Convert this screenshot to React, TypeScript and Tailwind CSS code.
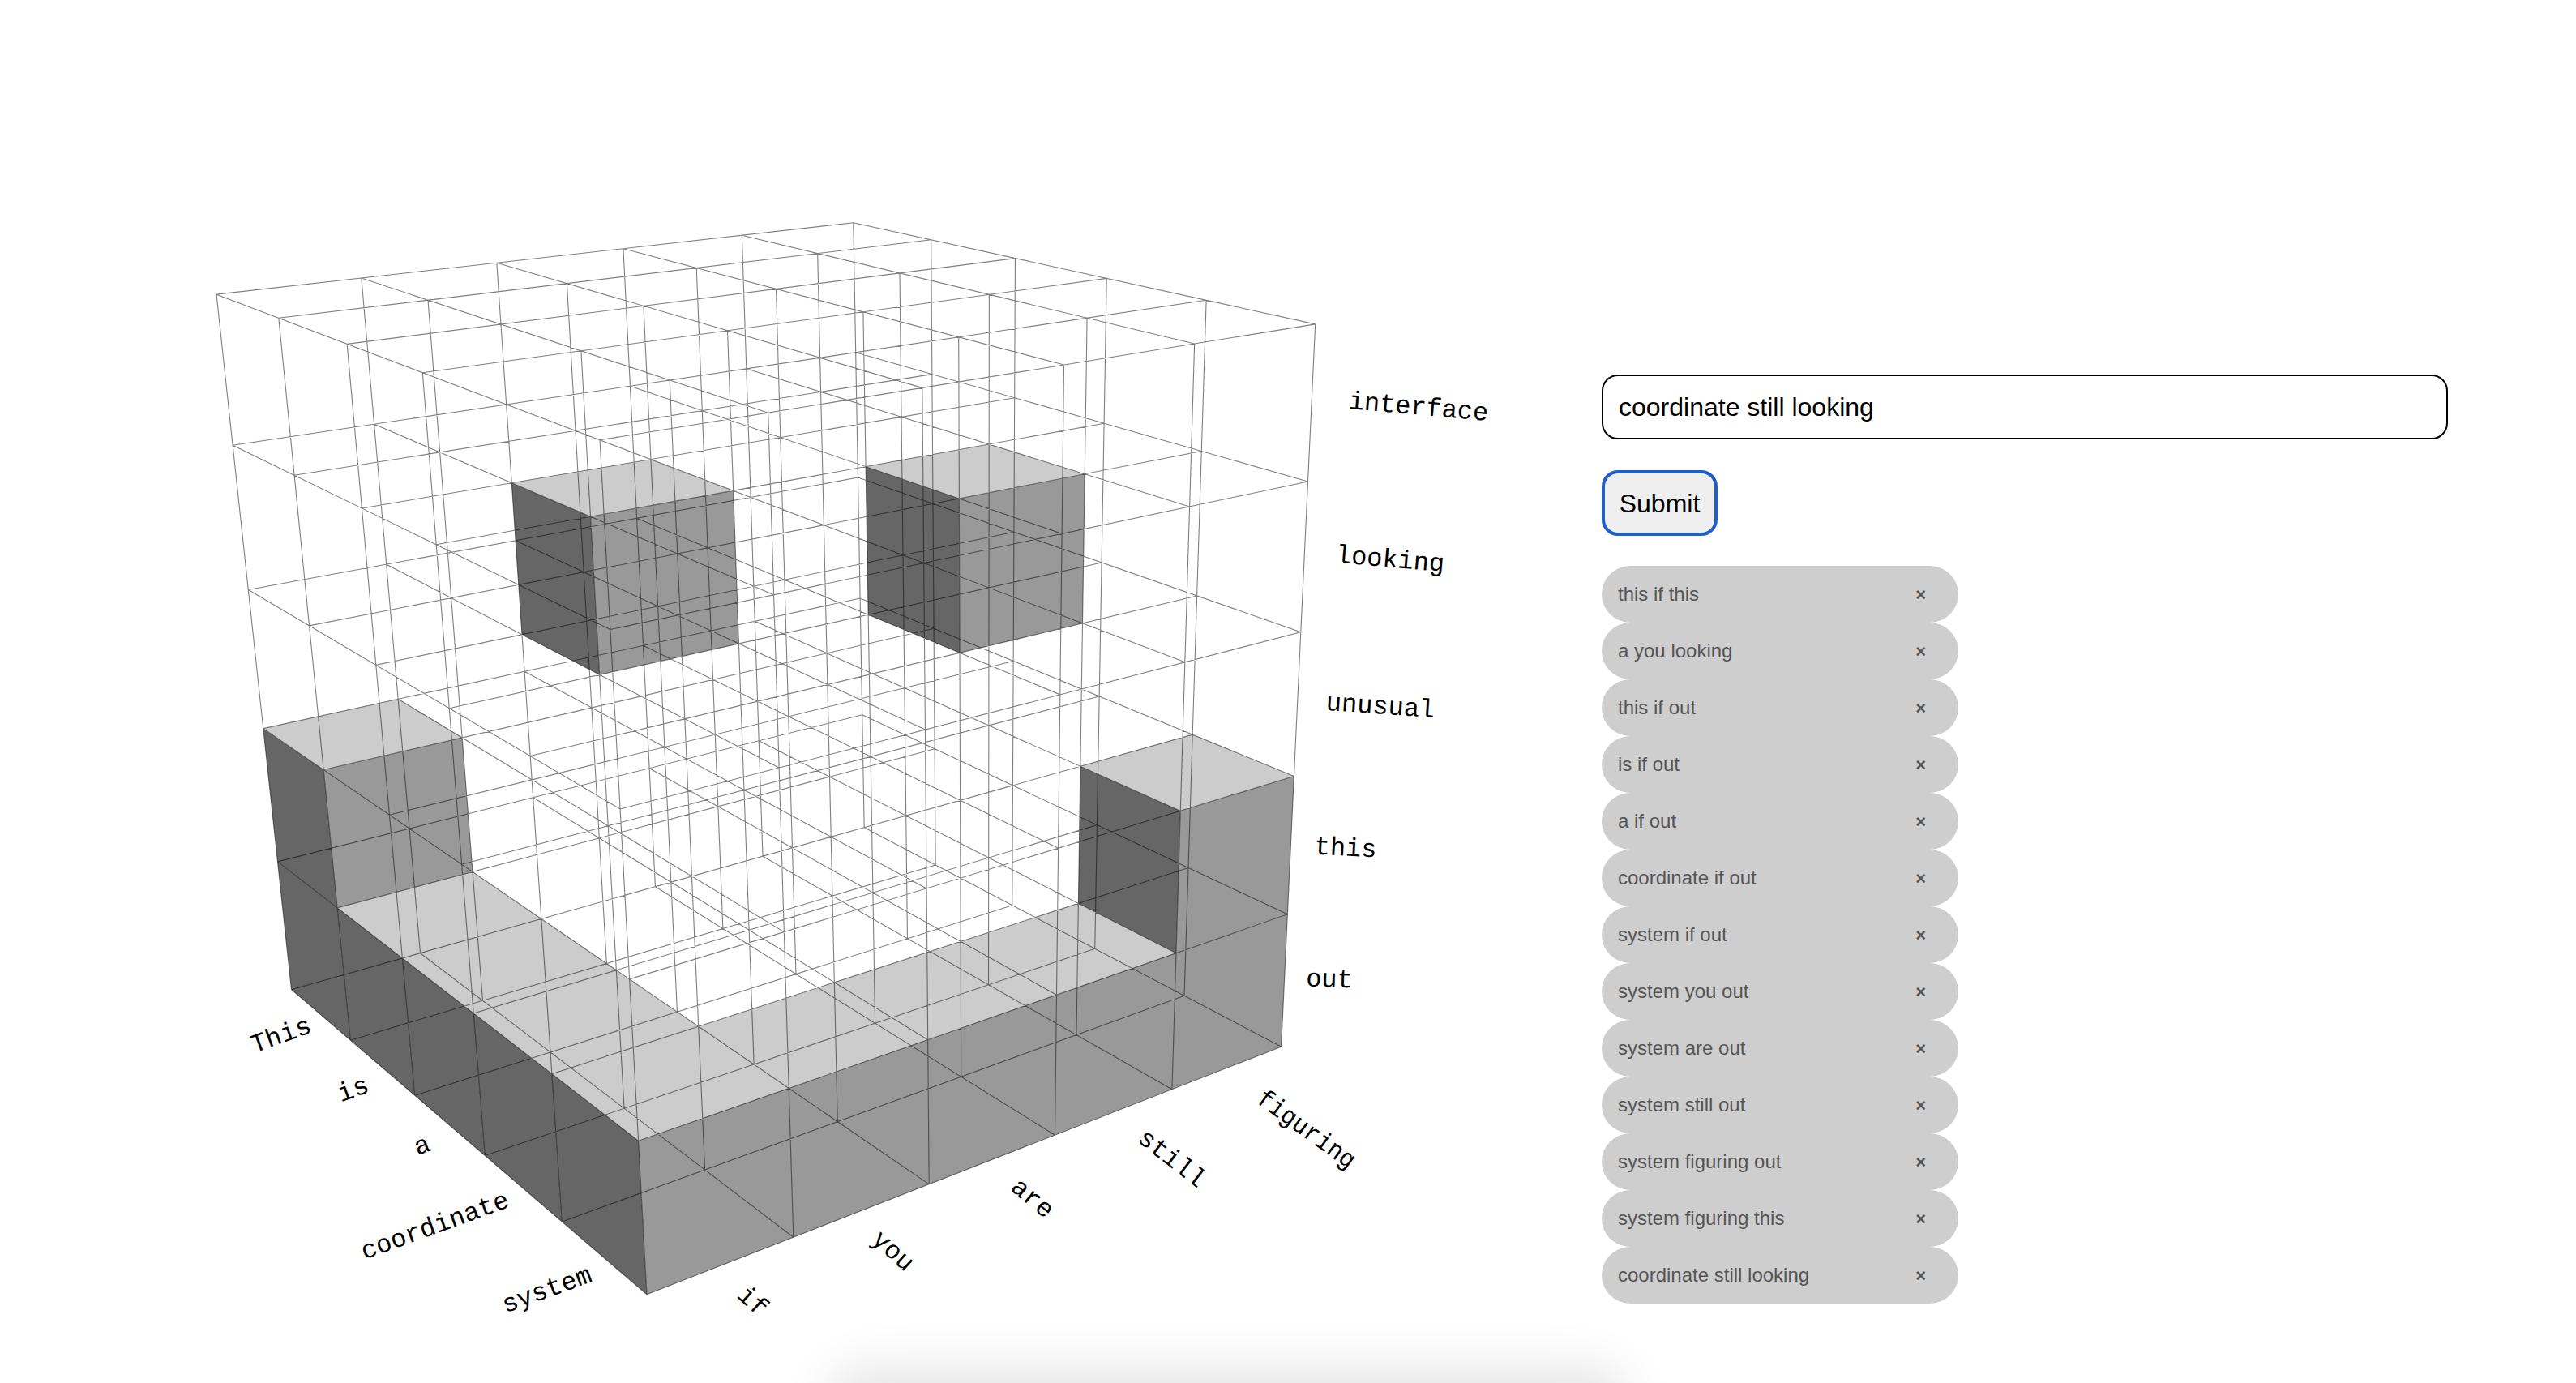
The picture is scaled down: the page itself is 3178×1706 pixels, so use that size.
const rows = ['This', 'is', 'a', 'coordinate', 'system'];

const tags = [
  'this if this',
  'a you looking',
  'this if out',
  'is if out',
  'a if out',
  'coordinate if out',
  'system if out',
  'system you out',
  'system are out',
  'system still out',
  'system figuring out',
  'system figuring this',
  'coordinate still looking',
];

// filled cells as [row, col, level]
const cells: number[][] = [
  [0, 0, 1],
  [2, 1, 3],
  [0, 0, 0],
  [1, 0, 0],
  [2, 0, 0],
  [3, 0, 0],
  [4, 0, 0],
  [4, 1, 0],
  [4, 2, 0],
  [4, 3, 0],
  [4, 4, 0],
  [4, 4, 1],
  [3, 3, 3],
];

const axisLabels: { text: string; x: number; y: number; r: number; len?: number }[] = [
  { text: 'interface', x: 1750, y: 503, r: 5 },
  { text: 'looking', x: 1715, y: 691, r: 5 },
  { text: 'unusual', x: 1703, y: 872, r: 4 },
  { text: 'this', x: 1660, y: 1047, r: 3 },
  { text: 'out', x: 1640, y: 1209, r: 2 },
  { text: rows[0], x: 347, y: 1278, r: -20 },
  { text: rows[1], x: 436, y: 1345, r: -20 },
  { text: rows[2], x: 521, y: 1414, r: -20 },
  { text: rows[3], x: 537, y: 1513, r: -20 },
  { text: rows[4], x: 675, y: 1592, r: -20 },
  { text: 'if', x: 928, y: 1606, r: 42 },
  { text: 'you', x: 1101, y: 1544, r: 42 },
  { text: 'are', x: 1273, y: 1479, r: 40 },
  { text: 'still', x: 1445, y: 1430, r: 38 },
  { text: 'figuring', x: 1611, y: 1394, r: 36, len: 142 },
];

// perspective projection of grid coords (0..5 on each axis) to picture coords.
// the camera sits at grid point (16, -6, 8), which is why some grid lines line up exactly
function project(i: number, j: number, k: number): string {
  const u = i / 5;
  const v = j / 5;
  const w = k / 5;
  const d = 1 - 0.2031 * u + 0.1612 * v - 0.0979 * w;
  const x = (359.5 + 276.4 * u + 878.54 * v - 118.6 * w) / d;
  const y = (1220.7 + 51.81 * u - 35.44 * v - 893.11 * w) / d;
  return `${x.toFixed(2)} ${y.toFixed(2)}`;
}

function gridPath() {
  let d = '';
  for (let a = 0; a <= 5; a++) {
    for (let b = 0; b <= 5; b++) {
      d += `M${project(a, b, 0)}L${project(a, b, 5)}`;
      d += `M${project(a, 0, b)}L${project(a, 5, b)}`;
      d += `M${project(0, a, b)}L${project(5, a, b)}`;
    }
  }
  return d;
}

function Cube({ i, j, k }: { i: number; j: number; k: number }) {
  const left = [project(i, j, k), project(i + 1, j, k), project(i + 1, j, k + 1), project(i, j, k + 1)];
  const right = [project(i + 1, j, k), project(i + 1, j + 1, k), project(i + 1, j + 1, k + 1), project(i + 1, j, k + 1)];
  const top = [project(i, j, k + 1), project(i + 1, j, k + 1), project(i + 1, j + 1, k + 1), project(i, j + 1, k + 1)];
  return (
    <g>
      <polygon points={left.join(' ')} fill="#666666" />
      <polygon points={right.join(' ')} fill="#999999" />
      <polygon points={top.join(' ')} fill="#cccccc" />
    </g>
  );
}

function Chart() {
  // draw back to front
  const sorted = [...cells].sort((a, b) => a[0] - b[0] || b[1] - a[1] || a[2] - b[2]);
  return (
    <svg viewBox="0 0 1900 1706" className="block w-[1900px] h-[1706px] shrink-0">
      {sorted.map(([i, j, k]) => (
        <Cube key={`${i}-${j}-${k}`} i={i} j={j} k={k} />
      ))}
      {/* one path so overlapping grid lines don't pile up darker */}
      <path d={gridPath()} fill="none" stroke="#000000" strokeOpacity={0.5} strokeWidth={1.1} />
      {axisLabels.map((l) => (
        <text
          key={l.text + l.x}
          transform={`translate(${l.x} ${l.y}) rotate(${l.r})`}
          textAnchor="middle"
          dominantBaseline="middle"
          fill="#000000"
          textLength={l.len}
          lengthAdjust={l.len ? 'spacingAndGlyphs' : undefined}
          className="font-['Liberation_Mono',monospace] text-[32px]"
        >
          {l.text}
        </text>
      ))}
    </svg>
  );
}

export default function App() {
  return (
    <div className="relative flex h-[1706px] overflow-hidden bg-white font-['Liberation_Sans',Arial,sans-serif]">
      <Chart />
      <div className="pl-[76px] pt-[462px]">
        <input
          readOnly
          value="coordinate still looking"
          className="block w-[1044px] h-[80px] px-[19px] border-2 border-black rounded-[20px] text-[32px] text-black outline-none"
        />
        <button className="block mt-[38px] w-[143px] h-[81px] border-[4px] border-[#1f5fc8] rounded-[20px] bg-[#efefef] text-[32px] text-black">
          Submit
        </button>
        <ul className="mt-[37px] w-[440px]">
          {tags.map((t) => (
            <li key={t} className="flex items-center justify-between h-[70px] pl-[20px] pr-[40px] rounded-[35px] bg-[#cecece] text-[24px] text-[#555555]">
              <span>{t}</span>
              <span className="text-[22px] font-bold">×</span>
            </li>
          ))}
        </ul>
      </div>
      {/* soft shadow peeking in at the bottom edge */}
      <div className="absolute left-[1040px] bottom-[-60px] w-[950px] h-[60px] rounded-full shadow-[0_0_60px_20px_rgba(0,0,0,0.1)]" />
    </div>
  );
}
